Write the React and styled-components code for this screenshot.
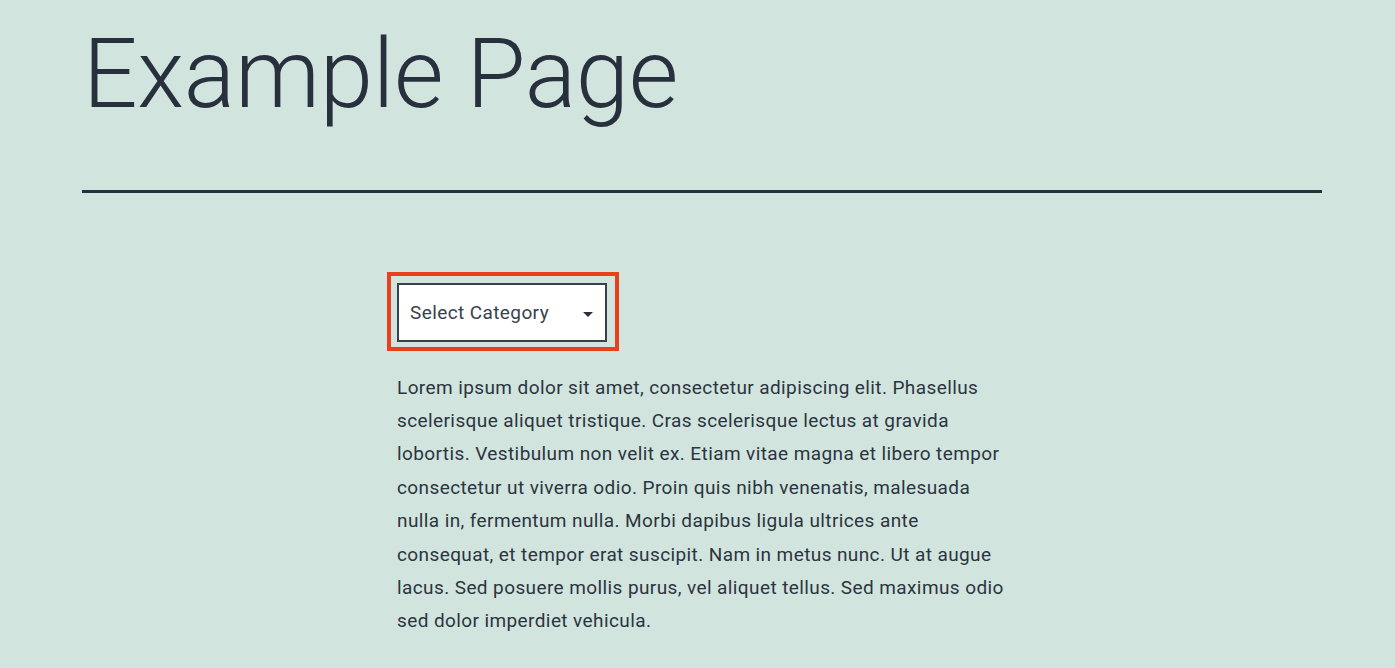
import React from "react";
import styled, { createGlobalStyle } from "styled-components";

const GlobalStyle = createGlobalStyle`
  html, body {
    margin: 0;
    padding: 0;
    background-color: #d1e4dd;
    color: #28303d;
    font-family: Roboto, "Liberation Sans", sans-serif;
  }
`;

const Page = styled.main`
  width: 1240px;
  margin-left: 82px;
  padding-top: 22px;
`;

const EntryHeader = styled.header`
  border-bottom: 3px solid #28303d;
  padding-bottom: 62px;
  margin-bottom: 90px;
`;

const Title = styled.h1`
  margin: 0 0 0 1px;
  font-size: 96px;
  font-weight: 300;
  line-height: 1.1;
  letter-spacing: -0.3px;
  color: #28303d;
`;

const Content = styled.div`
  width: 610px;
  margin: 0 auto;
`;

const Highlight = styled.div`
  display: inline-block;
  position: relative;
  &::after {
    content: "";
    position: absolute;
    left: -10px;
    top: -11px;
    right: -12px;
    bottom: -9px;
    border: 4px solid #e8401c;
    pointer-events: none;
  }
`;

const SelectBox = styled.div`
  box-sizing: border-box;
  width: 210px;
  height: 59px;
  border: 2px solid #39414d;
  background: #fff;
  display: flex;
  align-items: center;
  justify-content: space-between;
  padding: 0 12px 0 11px;
  font-size: 19px;
  letter-spacing: 0.4px;
  color: #39414d;
`;

const Arrow = styled.svg`
  width: 10px;
  height: 5px;
  margin-top: 5px;
`;

const Paragraph = styled.p`
  margin: 29px 0 0;
  font-size: 19px;
  letter-spacing: 0.4px;
  line-height: 33.4px;
  color: #2c3441;
`;

export default function App() {
  return (
    <>
      <GlobalStyle />
      <Page>
        <EntryHeader>
          <Title>Example Page</Title>
        </EntryHeader>
        <Content>
          <Highlight>
            <SelectBox>
              <span>Select Category</span>
              <Arrow viewBox="0 0 10 5">
                <path d="M0 0h10L5 5z" fill="#28303d" />
              </Arrow>
            </SelectBox>
          </Highlight>
          <Paragraph>
            Lorem ipsum dolor sit amet, consectetur adipiscing elit. Phasellus
            scelerisque aliquet tristique. Cras scelerisque lectus at gravida
            lobortis. Vestibulum non velit ex. Etiam vitae magna et libero tempor
            consectetur ut viverra odio. Proin quis nibh venenatis, malesuada
            nulla in, fermentum nulla. Morbi dapibus ligula ultrices ante
            consequat, et tempor erat suscipit. Nam in metus nunc. Ut at augue
            lacus. Sed posuere mollis purus, vel aliquet tellus. Sed maximus odio
            sed dolor imperdiet vehicula.
          </Paragraph>
        </Content>
      </Page>
    </>
  );
}
